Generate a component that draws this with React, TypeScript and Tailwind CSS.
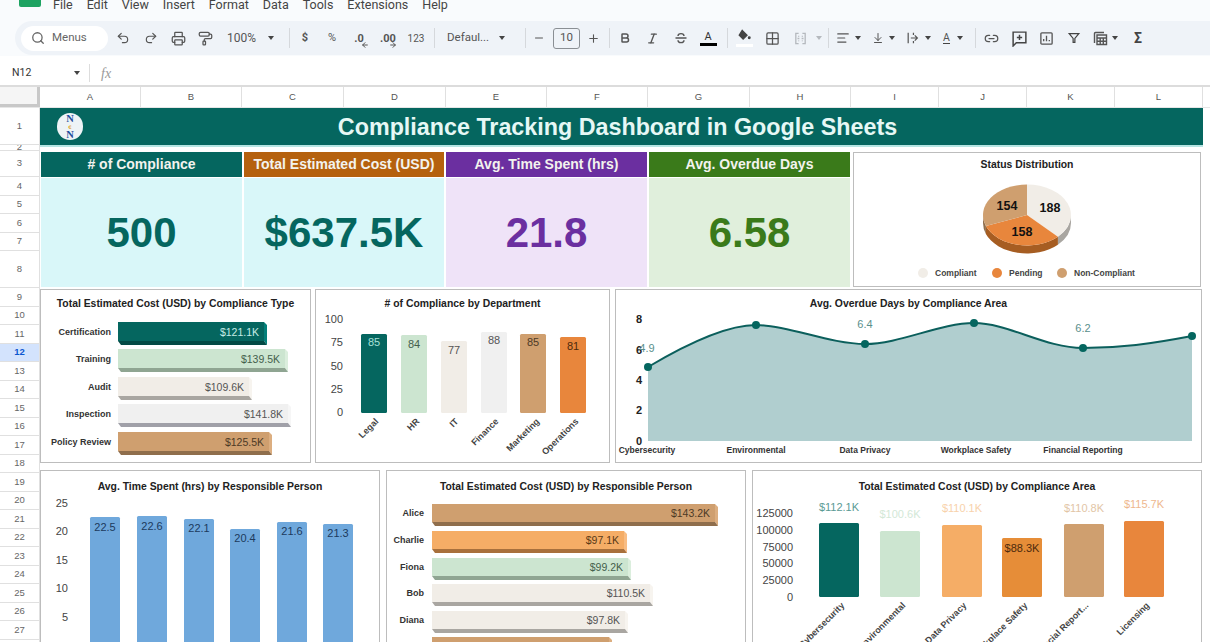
import type { ReactNode } from 'react';
import { Search, Undo2, Redo2, Printer, PaintRoller, Minus, Plus, Bold, Italic, Grid2x2, AlignLeft, ArrowDownToLine, ArrowLeft, ArrowRight, Link2 } from 'lucide-react';

const teal = '#05665f';
const mint = '#cce5d0';
const beige = '#f1ede7';
const gray = '#f0f0f0';
const tan = '#cf9f6f';
const orange = '#e8863c';
const peach = '#f5ad66';
const blue = '#6fa8dc';

const columns = [
  { name: 'A', w: 'w-[101px]' },
  { name: 'B', w: 'w-[101px]' },
  { name: 'C', w: 'w-[102px]' },
  { name: 'D', w: 'w-[102px]' },
  { name: 'E', w: 'w-[101px]' },
  { name: 'F', w: 'w-[101px]' },
  { name: 'G', w: 'w-[102px]' },
  { name: 'H', w: 'w-[101px]' },
  { name: 'I', w: 'w-[88px]' },
  { name: 'J', w: 'w-[88px]' },
  { name: 'K', w: 'w-[88px]' },
  { name: 'L', w: 'w-[88px]' },
];

const tallRows: Record<number, string> = {
  1: 'h-[37px]',
  2: 'h-[6px]',
  3: 'h-[26px]',
  4: 'h-[19px]',
  5: 'h-[18px]',
  6: 'h-[19px]',
  7: 'h-[18px]',
  8: 'h-[37px]',
};
const rows = Array.from({ length: 29 }, (_, i) => i + 1);

const kpis = [
  { title: '# of Compliance', value: '500', w: 'w-[201px]', head: 'bg-[#05665f]', body: 'bg-[#d9f7f9]', text: 'text-[#05665f]' },
  { title: 'Total Estimated Cost (USD)', value: '$637.5K', w: 'w-[200px]', head: 'bg-[#b5610e]', body: 'bg-[#d9f7f9]', text: 'text-[#05665f]' },
  { title: 'Avg. Time Spent (hrs)', value: '21.8', w: 'w-[201px]', head: 'bg-[#6b2fa0]', body: 'bg-[#efe3f8]', text: 'text-[#6b2fa0]' },
  { title: 'Avg. Overdue Days', value: '6.58', w: 'w-[201px]', head: 'bg-[#3a7a1a]', body: 'bg-[#e0efdc]', text: 'text-[#3a7a1a]' },
];

function Btn({ className, start, children }: { className: string; start?: boolean; children: ReactNode }) {
  return <div className={`flex h-full shrink-0 items-center ${start ? 'justify-start' : 'justify-center'} ${className}`}>{children}</div>;
}

function Caret({ className = '' }: { className?: string }) {
  return <span className={`h-0 w-0 shrink-0 border-x-[3.5px] border-t-[4px] border-x-transparent border-t-[#444] ${className}`} />;
}

function Sep({ className = '' }: { className?: string }) {
  return <div className={`h-[20px] w-px shrink-0 bg-[#d5d8dc] ${className}`} />;
}

// Sheets toolbar glyphs that lucide has no close match for
function Glyph({ size = 16, color = 'currentColor', children }: { size?: number; color?: string; children: ReactNode }) {
  return (
    <svg width={size} height={size} viewBox="0 0 16 16" fill="none" stroke={color} strokeWidth="1.4">
      {children}
    </svg>
  );
}

function Card({ className, titleClass, title, children }: { className: string; titleClass: string; title: string; children: ReactNode }) {
  return (
    <div className={`shrink-0 overflow-hidden border border-[#bdbdbd] bg-white ${className}`}>
      <div className={`flex items-center justify-center text-[10.4px] font-bold text-[#222] ${titleClass}`}>{title}</div>
      {children}
    </div>
  );
}

// viewBox is in page pixels so the numbers read straight off the screenshot
function Plot({ x, y, w, h, children }: { x: number; y: number; w: number; h: number; children: ReactNode }) {
  return (
    <svg viewBox={`${x} ${y} ${w} ${h}`} width={w} height={h} className="block overflow-visible">
      {children}
    </svg>
  );
}

type HBarData = { label: string; value: string; end: number; y: number; fill: string; dark: string; side: string; text: string };

function HBars({ data, x, labelX, height }: { data: HBarData[]; x: number; labelX: number; height: number }) {
  return (
    <>
      {data.map((b) => {
        const bottom = b.y + height;
        return (
          <g key={b.label}>
            <polygon points={`${b.end - 3},${b.y} ${b.end},${b.y + 3} ${b.end},${bottom + 4} ${b.end - 3},${bottom}`} fill={b.side} />
            <polygon points={`${x},${bottom} ${b.end - 3},${bottom} ${b.end},${bottom + 4} ${x + 3},${bottom + 4}`} fill={b.dark} />
            <rect x={x} y={b.y} width={b.end - x - 3} height={height} fill={b.fill} />
            <text x={labelX} y={b.y + height / 2} textAnchor="end" dominantBaseline="central" fontSize="9" fontWeight="700" fill="#333">
              {b.label}
            </text>
            <text x={b.end - 8} y={b.y + height / 2} textAnchor="end" dominantBaseline="central" fontSize="10.5" fill={b.text}>
              {b.value}
            </text>
          </g>
        );
      })}
    </>
  );
}

type VBarData = { x: number; top: number; fill: string; value: string; valueY: number; valueFill: string; label?: string; labelX?: number };

function VBars({ data, width, base, labelY }: { data: VBarData[]; width: number; base: number; labelY?: number }) {
  return (
    <>
      {data.map((b) => (
        <g key={b.x}>
          <rect x={b.x} y={b.top} width={width} height={base - b.top} rx="1.5" fill={b.fill} />
          <text x={b.x + width / 2} y={b.valueY} textAnchor="middle" dominantBaseline="central" fontSize="11" fill={b.valueFill}>
            {b.value}
          </text>
          {b.label && (
            <text
              x={b.labelX}
              y={labelY}
              textAnchor="end"
              fontSize="9"
              fontWeight="700"
              fill="#444"
              transform={`rotate(-45 ${b.labelX} ${labelY})`}
            >
              {b.label}
            </text>
          )}
        </g>
      ))}
    </>
  );
}

function YAxis({ ticks, x }: { ticks: [string, number][]; x: number }) {
  return (
    <>
      {ticks.map(([t, y]) => (
        <text key={t} x={x} y={y} textAnchor="end" dominantBaseline="central" fontSize="11" fill="#444">
          {t}
        </text>
      ))}
    </>
  );
}

// pie seen from above at an angle: t is degrees clockwise from the top
const pt = (t: number, dy = 0) => {
  const r = (t * Math.PI) / 180;
  return `${(1027 + 44 * Math.sin(r)).toFixed(1)} ${(215 - 30.5 * Math.cos(r) + dy).toFixed(1)}`;
};
const slice = (a: number, b: number) => `M1027 215 L${pt(a)} A44 30.5 0 ${b - a > 180 ? 1 : 0} 1 ${pt(b)} Z`;
const side = (a: number, b: number) => `M${pt(a)} A44 30.5 0 0 1 ${pt(b)} L${pt(b, 8)} A44 30.5 0 0 0 ${pt(a, 8)} Z`;

function StatusPie() {
  return (
    <Plot x={854} y={176} w={346} h={110}>
      <path d={side(90, 135.4)} fill="#a9a6a1" />
      <path d={side(135.4, 249.1)} fill="#a65d22" />
      <path d={side(249.1, 270)} fill="#8f6e4c" />
      <path d={slice(0, 135.4)} fill={beige} />
      <path d={slice(135.4, 249.1)} fill={orange} />
      <path d={slice(249.1, 360)} fill={tan} />
      <g fontSize="12.5" fontWeight="700" fill="#111" textAnchor="middle" dominantBaseline="central">
        <text x="1050" y="208">188</text>
        <text x="1022" y="232">158</text>
        <text x="1007" y="206">154</text>
      </g>
      <circle cx="923" cy="273" r="5" fill={beige} />
      <circle cx="997" cy="273" r="5" fill={orange} />
      <circle cx="1062" cy="273" r="5" fill={tan} />
      <g fontSize="8.5" fontWeight="700" fill="#444" dominantBaseline="central">
        <text x="935" y="273">Compliant</text>
        <text x="1009" y="273">Pending</text>
        <text x="1074" y="273">Non-Compliant</text>
      </g>
    </Plot>
  );
}

const typeBars: HBarData[] = [
  { label: 'Certification', value: '$121.1K', end: 267, y: 322, fill: teal, dark: '#034a45', side: '#04807a', text: '#c5ece6' },
  { label: 'Training', value: '$139.5K', end: 288, y: 349, fill: mint, dark: '#8fa592', side: '#dbeedd', text: '#44604c' },
  { label: 'Audit', value: '$109.6K', end: 252, y: 377, fill: beige, dark: '#a9a6a1', side: '#f7f4ef', text: '#555' },
  { label: 'Inspection', value: '$141.8K', end: 291, y: 404, fill: gray, dark: '#a0a0a8', side: '#f6f6f6', text: '#555' },
  { label: 'Policy Review', value: '$125.5K', end: 272, y: 432, fill: tan, dark: '#8f6e4c', side: '#dcae80', text: '#4d3a26' },
];

const deptBars: VBarData[] = [
  { x: 361, top: 334, fill: teal, value: '85', valueY: 342, valueFill: '#a9e0d8', label: 'Legal', labelX: 379 },
  { x: 401, top: 335, fill: mint, value: '84', valueY: 344, valueFill: '#44604c', label: 'HR', labelX: 420 },
  { x: 441, top: 341, fill: beige, value: '77', valueY: 350, valueFill: '#555', label: 'IT', labelX: 459 },
  { x: 481, top: 332, fill: gray, value: '88', valueY: 340, valueFill: '#555', label: 'Finance', labelX: 499 },
  { x: 520, top: 334, fill: tan, value: '85', valueY: 342, valueFill: '#4d3a26', label: 'Marketing', labelX: 540 },
  { x: 560, top: 337, fill: orange, value: '81', valueY: 346, valueFill: '#4d2a0c', label: 'Operations', labelX: 579 },
];

const timeBars: VBarData[] = [
  { x: 90, top: 517, fill: blue, value: '22.5', valueY: 527, valueFill: '#1c3a5c' },
  { x: 137, top: 516, fill: blue, value: '22.6', valueY: 526, valueFill: '#1c3a5c' },
  { x: 184, top: 519, fill: blue, value: '22.1', valueY: 528, valueFill: '#1c3a5c' },
  { x: 230, top: 529, fill: blue, value: '20.4', valueY: 538, valueFill: '#1c3a5c' },
  { x: 277, top: 522, fill: blue, value: '21.6', valueY: 531, valueFill: '#1c3a5c' },
  { x: 323, top: 524, fill: blue, value: '21.3', valueY: 533, valueFill: '#1c3a5c' },
];

const personBars: HBarData[] = [
  { label: 'Alice', value: '$143.2K', end: 718, y: 504, fill: tan, dark: '#8f6e4c', side: '#dcae80', text: '#4d3a26' },
  { label: 'Charlie', value: '$97.1K', end: 627, y: 531, fill: peach, dark: '#a8703c', side: '#f8bd84', text: '#5a3a16' },
  { label: 'Fiona', value: '$99.2K', end: 631, y: 558, fill: mint, dark: '#8fa592', side: '#dbeedd', text: '#44604c' },
  { label: 'Bob', value: '$110.5K', end: 653, y: 584, fill: beige, dark: '#a9a6a1', side: '#f7f4ef', text: '#555' },
  { label: 'Diana', value: '$97.8K', end: 628, y: 611, fill: beige, dark: '#a9a6a1', side: '#f7f4ef', text: '#555' },
  { label: 'Ethan', value: '$88.8K', end: 612, y: 637, fill: tan, dark: '#8f6e4c', side: '#dcae80', text: '#4d3a26' },
];

const areaBars: VBarData[] = [
  { x: 819, top: 523, fill: teal, value: '$112.1K', valueY: 507, valueFill: '#5a9a94', label: 'Cybersecurity', labelX: 845 },
  { x: 880, top: 531, fill: mint, value: '$100.6K', valueY: 514, valueFill: '#d3e8d7', label: 'Environmental', labelX: 906 },
  { x: 942, top: 525, fill: peach, value: '$110.1K', valueY: 508, valueFill: '#f8d2ab', label: 'Data Privacy', labelX: 967 },
  { x: 1002, top: 538, fill: '#e68d38', value: '$88.3K', valueY: 548, valueFill: '#4d2a0c', label: 'Workplace Safety', labelX: 1028 },
  { x: 1064, top: 524, fill: tan, value: '$110.8K', valueY: 508, valueFill: '#e2c5a6', label: 'Financial Report...', labelX: 1089 },
  { x: 1124, top: 521, fill: orange, value: '$115.7K', valueY: 504, valueFill: '#eeb78e', label: 'Licensing', labelX: 1150 },
];

function OverdueArea() {
  const line = 'M648 367 C685 345 725 325 756 325 S830 344 865 344 S940 323 974 323 S1045 348 1083 348 S1150 344 1192 336';
  const dots = [[648, 367], [756, 325], [865, 344], [974, 323], [1083, 348], [1192, 336]];
  return (
    <Plot x={616} y={317} w={585} h={145}>
      <path d={`${line} L1192 441 L648 441 Z`} fill="#b0cecf" />
      <path d={line} fill="none" stroke="#0b5f5c" strokeWidth="2" />
      {dots.map(([x, y]) => (
        <circle key={x} cx={x} cy={y} r="4" fill={teal} />
      ))}
      <g fontSize="11" fontWeight="700" fill="#222" textAnchor="end" dominantBaseline="central">
        <text x="642" y="319">8</text>
        <text x="642" y="350">6</text>
        <text x="642" y="380">4</text>
        <text x="642" y="410">2</text>
        <text x="642" y="441">0</text>
      </g>
      <g fontSize="11" fill="#5a8f8c" textAnchor="middle" dominantBaseline="central">
        <text x="647" y="348">4.9</text>
        <text x="865" y="324">6.4</text>
        <text x="1083" y="328">6.2</text>
      </g>
      <g fontSize="8.5" fontWeight="700" fill="#333" textAnchor="middle" dominantBaseline="central">
        <text x="647" y="450">Cybersecurity</text>
        <text x="756" y="450">Environmental</text>
        <text x="865" y="450">Data Privacy</text>
        <text x="976" y="450">Workplace Safety</text>
        <text x="1083" y="450">Financial Reporting</text>
      </g>
    </Plot>
  );
}

function Toolbar() {
  return (
    <div className="h-[36px] bg-[#f9fbfd] pl-[15px] pt-px">
      <div className="flex h-[34px] items-center rounded-l-full bg-[#eff3f8] pl-[6px] font-['Roboto',sans-serif] text-[12px] text-[#555]">
        <div className="flex h-[25px] w-[87px] shrink-0 items-center gap-[7px] rounded-full bg-white pl-[10px] text-[11.5px] text-[#666]">
          <Search size={14} strokeWidth={2.2} />
          <span>Menus</span>
        </div>
        <Btn className="w-[29px]"><Undo2 size={14} /></Btn>
        <Btn className="w-[28px]"><Redo2 size={14} /></Btn>
        <Btn className="w-[26px]"><Printer size={15} /></Btn>
        <Btn className="w-[28px]"><PaintRoller size={15} /></Btn>
        <Btn start className="w-[60px] pl-[8px]"><span>100%</span><Caret className="ml-[12px]" /></Btn>
        <Sep className="ml-[10px]" />
        <Btn className="w-[30px]"><span className="text-[11px] font-bold">$</span></Btn>
        <Btn className="w-[24px]"><span className="text-[11px]">%</span></Btn>
        <Btn className="w-[30px]">
          <span className="relative text-[11px] font-bold leading-none">
            .0
            <ArrowLeft size={8} strokeWidth={3} className="absolute -bottom-[5px] -right-[5px]" />
          </span>
        </Btn>
        <Btn className="w-[28px]">
          <span className="relative text-[11px] font-bold leading-none">
            .00
            <ArrowRight size={8} strokeWidth={3} className="absolute -bottom-[5px] -right-[1px]" />
          </span>
        </Btn>
        <Btn className="w-[28px]"><span className="text-[10px]">123</span></Btn>
        <Sep className="ml-[4px]" />
        <Btn start className="w-[90px] pl-[12px]"><span className="text-[11.5px]">Defaul...</span><Caret className="ml-[10px]" /></Btn>
        <Sep />
        <Btn className="w-[26px]"><Minus size={12} /></Btn>
        <div className="ml-px flex h-[21px] w-[27px] shrink-0 items-center justify-center rounded-[3px] border border-[#8a8f94] text-[11.5px]">10</div>
        <Btn className="w-[26px]"><Plus size={13} /></Btn>
        <Sep className="ml-[3px]" />
        <Btn className="w-[30px]"><Bold size={12} strokeWidth={3} /></Btn>
        <Btn className="w-[24px]"><Italic size={13} strokeWidth={2.5} /></Btn>
        <Btn className="w-[34px]">
          <Glyph>
            <path d="M2.5 8h11M5 6C5 2.8 11 2.8 11 6M5 10.2C5 13.4 11 13.4 11 10.2" />
          </Glyph>
        </Btn>
        <Btn className="w-[20px]">
          <span className="flex flex-col items-center text-[11px] leading-[12px] text-[#333]">
            A<span className="h-[3px] w-[17px] bg-black" />
          </span>
        </Btn>
        <Sep className="ml-[9px]" />
        <Btn className="w-[32px]">
          <span className="flex flex-col items-center">
            <Glyph size={14} color="#444">
              <path d="M6 1.5L11.5 7L7 11.5L2.5 7Z" fill="#444" />
              <circle cx="14" cy="10" r="1" fill="#444" />
            </Glyph>
            <span className="mt-px h-[3px] w-[17px] bg-white" />
          </span>
        </Btn>
        <Btn className="w-[24px]"><Grid2x2 size={15} /></Btn>
        <Btn className="w-[32px]">
          <Glyph size={15} color="#b5b9be">
            <path d="M6 2.5H3v11h3M10 2.5h3v11h-3M4.8 8h2M9.2 8h2M6 5v1M10 5v1M6 10v1M10 10v1" />
          </Glyph>
        </Btn>
        <span className="h-0 w-0 shrink-0 border-x-[3px] border-t-[4px] border-x-transparent border-t-[#b5b9be]" />
        <Sep className="ml-[6px]" />
        <Btn start className="w-[34px] pl-[7px]"><AlignLeft size={14} /><Caret className="ml-[5px]" /></Btn>
        <Btn start className="w-[34px] pl-[9px]"><ArrowDownToLine size={12} /><Caret className="ml-[5px]" /></Btn>
        <Btn start className="w-[36px] pl-[9px]">
          <Glyph size={14}>
            <path d="M2.5 2v12M5.5 8h7.5M10 5l3 3-3 3M8.5 2v2.5M8.5 11.5V14" />
          </Glyph>
          <Caret className="ml-[5px]" />
        </Btn>
        <Btn start className="w-[35px] pl-[10px]">
          <span className="border-b border-[#444] text-[10.5px] leading-[11px]">A</span>
          <Caret className="ml-[7px]" />
        </Btn>
        <Sep className="ml-[7px]" />
        <Btn className="w-[30px]"><Link2 size={15} /></Btn>
        <Btn className="w-[26px]">
          <Glyph size={17} color="#444">
            <path d="M2 2h12v10H5l-3 3zM8 4.5v5M5.5 7h5" />
          </Glyph>
        </Btn>
        <Btn className="w-[28px]">
          <Glyph size={15}>
            <rect x="2" y="2" width="12" height="12" rx="1" />
            <path d="M5 11V8.5M8 11V5M11 11V9.5" />
          </Glyph>
        </Btn>
        <Btn className="w-[28px]">
          <Glyph size={14} color="#444">
            <path d="M2.5 3h11L9 8.5V13H7V8.5Z" />
          </Glyph>
        </Btn>
        <Btn start className="w-[32px] pl-[4px]">
          <Glyph>
            <path d="M2.5 13V3.5a1 1 0 0 1 1-1H12M5 5h9.5v9.5H5ZM5 8h9.5M5 11.2h9.5M8.2 8v6.5M11.3 8v6.5" />
          </Glyph>
          <Caret className="ml-[4px]" />
        </Btn>
        <Btn className="w-[36px]"><span className="text-[14px] font-bold text-[#444]">Σ</span></Btn>
      </div>
    </div>
  );
}

export default function App() {
  return (
    <div className="relative h-[642px] w-[1210px] overflow-hidden bg-white font-['Liberation_Sans',sans-serif]">
      {/* Menu bar */}
      <div className="flex h-[20px] items-start bg-[#f9fbfd] pl-[19px] font-['Roboto',sans-serif] text-[12.5px] leading-[9px] text-[#444]">
        <div className="h-[7px] w-[22px] rounded-b-[2px] bg-[#1ea362]" />
        <div className="ml-[12px] flex gap-[14px]">
          {['File', 'Edit', 'View', 'Insert', 'Format', 'Data', 'Tools', 'Extensions', 'Help'].map((m) => (
            <span key={m}>{m}</span>
          ))}
        </div>
      </div>

      <Toolbar />

      {/* Formula bar */}
      <div className="flex h-[31px] items-center border-b-2 border-[#dcdcdc] bg-white pl-[12px] pt-[5px] font-['Roboto',sans-serif] text-[10.5px] text-[#333]">
        <span className="w-[62px]">N12</span>
        <Caret />
        <span className="ml-[9px] h-[18px] w-px bg-[#ddd]" />
        <span className="ml-[11px] font-['Liberation_Serif',serif] text-[14px] italic text-[#999]">fx</span>
      </div>

      {/* Column headers */}
      <div className="flex h-[21px] border-b border-[#e6e6e6]">
        <div className="h-full w-[40px] shrink-0 border-r-[3px] border-b-[3px] border-[#c8c8c8] bg-[#f5f5f5]" />
        {columns.map((c) => (
          <div key={c.name} className={`flex shrink-0 items-center justify-center border-r border-[#e0e0e0] text-[9.5px] text-[#555] ${c.w}`}>
            {c.name}
          </div>
        ))}
      </div>

      <div className="flex">
        {/* Row headers */}
        <div className="w-[40px] shrink-0">
          {rows.map((n) => (
            <div
              key={n}
              className={`flex items-center justify-center overflow-hidden border-b border-r border-[#e0e0e0] text-[9.5px] ${tallRows[n] ?? 'h-[18.5px]'} ${n === 12 ? 'bg-[#d3e3fd] font-bold text-[#0b57d0]' : 'text-[#666]'}`}
            >
              {n}
            </div>
          ))}
        </div>

        <div className="w-[1163px] shrink-0">
          {/* Banner */}
          <div className="relative flex h-[39px] items-center justify-center border-b-2 border-[#b5e5e3] bg-[#05665f] pr-[8px] pt-px text-[23.3px] font-bold text-[#e6f8f5]">
            <div className="absolute left-[17px] top-[5px] flex h-[27px] w-[26px] flex-col items-center justify-center rounded-full bg-[#eef3f6] font-['Liberation_Serif',serif] text-[10.5px] font-bold leading-[8px] text-[#1f4e9c]">
              <span>N</span>
              <span className="text-[7px] text-[#e0a020]">¢</span>
              <span>N</span>
            </div>
            Compliance Tracking Dashboard in Google Sheets
          </div>

          {/* KPI row */}
          <div className="mt-[5px] flex pl-px">
            <div className="flex gap-[2px]">
              {kpis.map((k) => (
                <div key={k.title} className={`flex h-[135px] flex-col ${k.w}`}>
                  <div className={`flex h-[25px] shrink-0 items-center justify-center text-[14px] font-bold text-[#f3f3ee] ${k.head}`}>
                    {k.title}
                  </div>
                  <div className={`mt-px flex flex-1 items-center justify-center text-[42px] font-bold ${k.body} ${k.text}`}>
                    {k.value}
                  </div>
                </div>
              ))}
            </div>
            <Card className="ml-[3px] h-[135px] w-[348px]" titleClass="h-[23px]" title="Status Distribution">
              <StatusPie />
            </Card>
          </div>

          {/* Middle charts */}
          <div className="mt-[2px] flex">
            <Card className="h-[174px] w-[271px]" titleClass="h-[27px]" title="Total Estimated Cost (USD) by Compliance Type">
              <Plot x={41} y={317} w={269} h={145}>
                <HBars data={typeBars} x={118} labelX={111} height={19} />
              </Plot>
            </Card>
            <Card className="ml-[4px] h-[174px] w-[295px]" titleClass="h-[27px]" title="# of Compliance by Department">
              <Plot x={316} y={317} w={293} h={145}>
                <YAxis x={343} ticks={[['100', 319], ['75', 342], ['50', 366], ['25', 389], ['0', 412]]} />
                <VBars data={deptBars} width={26} base={413} labelY={422} />
              </Plot>
            </Card>
            <Card className="ml-[5px] h-[174px] w-[587px]" titleClass="h-[27px]" title="Avg. Overdue Days by Compliance Area">
              <OverdueArea />
            </Card>
          </div>

          {/* Bottom charts, cut off by the window */}
          <div className="mt-[7px] flex">
            <Card className="h-[200px] w-[340px]" titleClass="h-[31px]" title="Avg. Time Spent (hrs) by Responsible Person">
              <Plot x={41} y={502} w={338} h={168}>
                <YAxis x={68} ticks={[['25', 503], ['20', 531], ['15', 560], ['10', 588], ['5', 617]]} />
                <VBars data={timeBars} width={30} base={645} />
              </Plot>
            </Card>
            <Card className="ml-[6px] h-[200px] w-[360px]" titleClass="h-[31px]" title="Total Estimated Cost (USD) by Responsible Person">
              <Plot x={387} y={502} w={358} h={168}>
                <HBars data={personBars} x={432} labelX={424} height={18} />
              </Plot>
            </Card>
            <Card className="ml-[6px] h-[200px] w-[450px]" titleClass="h-[31px]" title="Total Estimated Cost (USD) by Compliance Area">
              <Plot x={753} y={502} w={448} h={168}>
                <YAxis
                  x={793}
                  ticks={[['125000', 513], ['100000', 530], ['75000', 547], ['50000', 563], ['25000', 580], ['0', 597]]}
                />
                <VBars data={areaBars} width={40} base={597} labelY={606} />
              </Plot>
            </Card>
          </div>
        </div>
      </div>
    </div>
  );
}
